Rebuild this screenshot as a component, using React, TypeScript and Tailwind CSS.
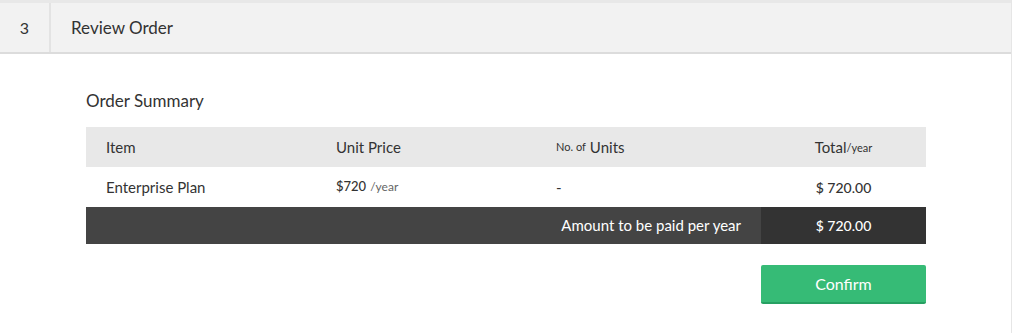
const font = { fontFamily: '"Source Sans Pro", Lato, "Open Sans", sans-serif' };

const App = () => {
  return (
    <div
      className="w-[1012px] h-[333px] bg-white border-r border-[#e6e6e6] text-[#333]"
      style={font}
    >
      <div className="flex h-[54px] bg-[#f2f2f2] border-t-[3px] border-[#e8e8e8] border-b-2 border-b-[#dcdcdc]">
        <div className="w-[51px] flex items-center justify-center border-r-2 border-[#e3e3e3] text-[16px]">
          3
        </div>
        <div className="flex items-center pl-5 text-[17px]">Review Order</div>
      </div>

      <div className="ml-[86px] w-[840px] pt-[37px]">
        <h2 className="text-[17px] leading-5 mb-[16px]">Order Summary</h2>

        <div className="grid grid-cols-[230px_220px_225px_165px] text-[15px]">
          <div className="bg-[#e8e8e8] h-10 flex items-center pl-5">Item</div>
          <div className="bg-[#e8e8e8] h-10 flex items-center pl-5">Unit Price</div>
          <div className="bg-[#e8e8e8] h-10 flex items-center pl-5">
            <span className="text-[11px] mr-1">No. of</span>Units
          </div>
          <div className="bg-[#e8e8e8] h-10 flex items-center justify-center">
            Total<span className="text-[11px] mt-[3px]">/year</span>
          </div>

          <div className="h-10 flex items-center pl-5">Enterprise Plan</div>
          <div className="h-10 flex items-center pl-5 text-[13px] font-medium">
            $720<span className="text-[12px] font-normal text-[#666] ml-1">/year</span>
          </div>
          <div className="h-10 flex items-center pl-5">-</div>
          <div className="h-10 flex items-center justify-center text-[14px] font-medium">$ 720.00</div>

          <div className="col-span-3 bg-[#444] h-[37px] flex items-center justify-end pr-5 text-white">
            Amount to be paid per year
          </div>
          <div className="bg-[#333] h-[37px] flex items-center justify-center text-white text-[14px] font-medium">
            $ 720.00
          </div>
        </div>

        <div className="flex justify-end mt-[21px]">
          <button className="w-[165px] h-[39px] bg-[#36bb76] border-b-2 border-[#27a062] rounded-[2px] text-white text-[16px]">
            Confirm
          </button>
        </div>
      </div>
    </div>
  );
};

export default App;
